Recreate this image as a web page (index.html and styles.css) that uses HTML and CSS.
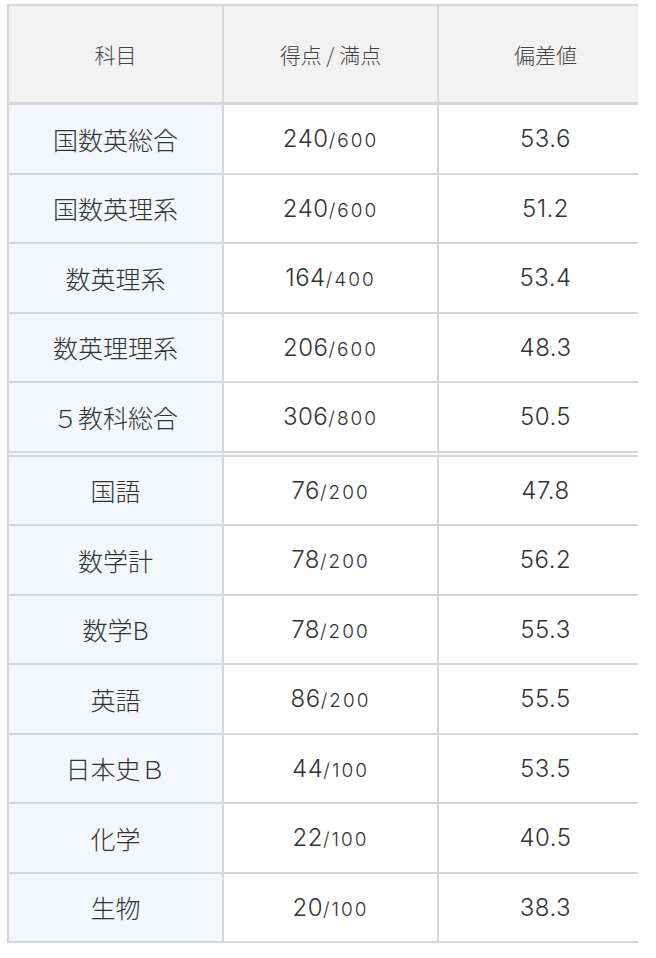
FILE: index.html
```html
<!DOCTYPE html>
<html lang="ja">
<head>
<meta charset="utf-8">
<title>成績表</title>
<link rel="stylesheet" href="styles.css">
</head>
<body>
<div class="wrap">
<table class="grades">
  <thead>
    <tr><th>科目</th><th>得点 / 満点</th><th>偏差値</th></tr>
  </thead>
  <tbody>
    <tr><td class="subj">国数英総合</td><td><span class="pt">240</span><span class="full">/600</span></td><td class="dev">53.6</td></tr>
    <tr><td class="subj">国数英理系</td><td><span class="pt">240</span><span class="full">/600</span></td><td class="dev">51.2</td></tr>
    <tr><td class="subj">数英理系</td><td><span class="pt">164</span><span class="full">/400</span></td><td class="dev">53.4</td></tr>
    <tr><td class="subj">数英理理系</td><td><span class="pt">206</span><span class="full">/600</span></td><td class="dev">48.3</td></tr>
    <tr class="sep"><td class="subj">５教科総合</td><td><span class="pt">306</span><span class="full">/800</span></td><td class="dev">50.5</td></tr>
    <tr><td class="subj">国語</td><td><span class="pt">76</span><span class="full">/200</span></td><td class="dev">47.8</td></tr>
    <tr><td class="subj">数学計</td><td><span class="pt">78</span><span class="full">/200</span></td><td class="dev">56.2</td></tr>
    <tr><td class="subj">数学B</td><td><span class="pt">78</span><span class="full">/200</span></td><td class="dev">55.3</td></tr>
    <tr><td class="subj">英語</td><td><span class="pt">86</span><span class="full">/200</span></td><td class="dev">55.5</td></tr>
    <tr><td class="subj">日本史Ｂ</td><td><span class="pt">44</span><span class="full">/100</span></td><td class="dev">53.5</td></tr>
    <tr><td class="subj">化学</td><td><span class="pt">22</span><span class="full">/100</span></td><td class="dev">40.5</td></tr>
    <tr><td class="subj">生物</td><td><span class="pt">20</span><span class="full">/100</span></td><td class="dev">38.3</td></tr>
  </tbody>
</table>
</div>
</body>
</html>
```
FILE: styles.css
```css
html, body {
  margin: 0;
  padding: 0;
  background: #ffffff;
}

body {
  font-family: "Inter", "Noto Sans CJK JP", sans-serif;
  font-weight: 300;
  color: #333333;
}

.wrap {
  margin: 4px 0 0 7px;
  width: 631px;
  overflow: hidden;
}

.grades {
  border-spacing: 0;
  border-top: 2px solid #d6d6d6;
  border-left: 2px solid #d6d6d6;
  width: 647px;
  table-layout: fixed;
}

.grades th,
.grades td {
  width: 213px;
  border-right: 2px solid #d6d6d6;
  border-bottom: 2px solid #d6d6d6;
  text-align: center;
  vertical-align: middle;
  padding: 0;
}

.grades th {
  height: 96px;
  background: #f2f2f2;
  font-family: "Noto Sans CJK JP", sans-serif;
  font-weight: 300;
  font-size: 21px;
  color: #444444;
  border-bottom-width: 3px;
}

.grades td {
  height: 67.5px;
  font-size: 24px;
}

.grades td.subj {
  background: #f3f7fc;
  font-family: "Noto Sans CJK JP", sans-serif;
  font-weight: 300;
  font-size: 25px;
}

.grades tr.sep td {
  border-bottom: 6px double #d6d6d6;
}

.pt {
  font-size: 24px;
  letter-spacing: 0.5px;
}

.full {
  font-size: 19px;
  letter-spacing: 2px;
}

.dev {
  letter-spacing: 0.5px;
}
```
